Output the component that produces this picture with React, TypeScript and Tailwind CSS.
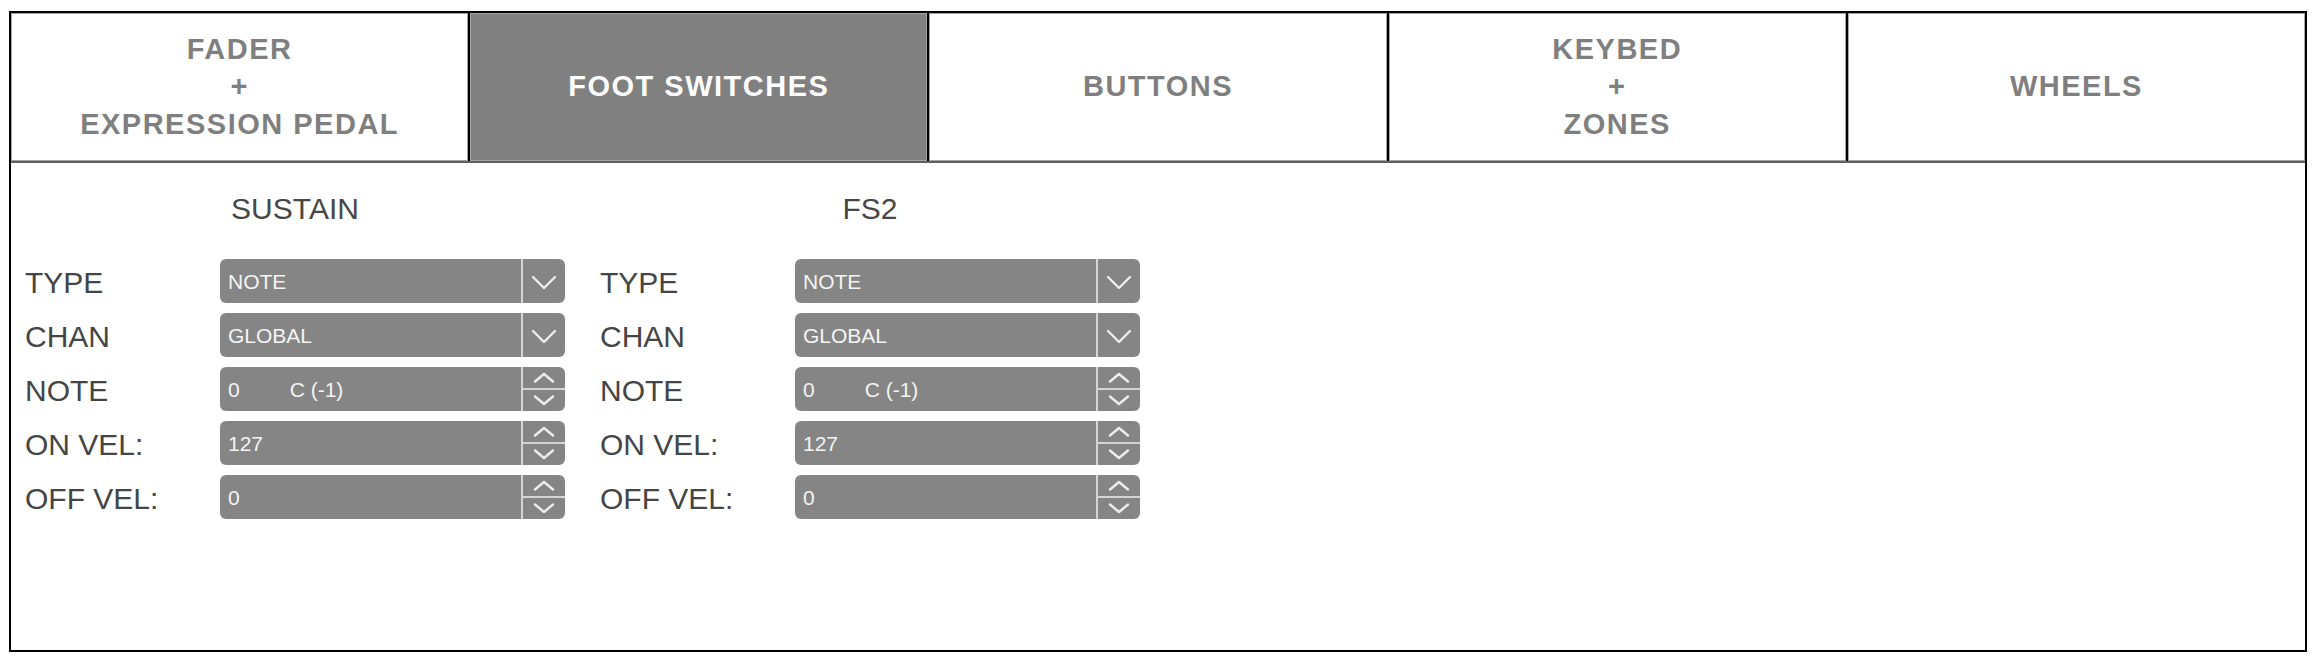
import React from 'react'

const tabs = [
  { lines: ['FADER', '+', 'EXPRESSION PEDAL'], active: false },
  { lines: ['FOOT SWITCHES'], active: true },
  { lines: ['BUTTONS'], active: false },
  { lines: ['KEYBED', '+', 'ZONES'], active: false },
  { lines: ['WHEELS'], active: false },
]

type Field = { label: string; value: string; extra?: string; kind: 'select' | 'spin' }

const fields: Field[] = [
  { label: 'TYPE', value: 'NOTE', kind: 'select' },
  { label: 'CHAN', value: 'GLOBAL', kind: 'select' },
  { label: 'NOTE', value: '0', extra: 'C (-1)', kind: 'spin' },
  { label: 'ON VEL:', value: '127', kind: 'spin' },
  { label: 'OFF VEL:', value: '0', kind: 'spin' },
]

const Chevron = ({ up = false, small = false }: { up?: boolean; small?: boolean }) => (
  <svg
    width={small ? 22 : 26}
    height={small ? 11 : 15}
    viewBox={small ? '0 0 22 11' : '0 0 26 15'}
    fill="none"
    stroke="#ededed"
    strokeWidth={2.4}
    strokeLinecap="round"
    strokeLinejoin="round"
  >
    {small ? (
      up ? (
        <polyline points="2,9.5 11,2 20,9.5" />
      ) : (
        <polyline points="2,1.5 11,9 20,1.5" />
      )
    ) : (
      <polyline points="2,2 13,13 24,2" />
    )}
  </svg>
)

const Control = ({ field }: { field: Field }) => (
  <div className="flex h-[44px] w-[345px] overflow-hidden rounded-[6px] bg-[#858585]">
    <div className="flex flex-1 items-center gap-[50px] pl-[8px] text-[21px] leading-none text-[#f4f4f4]">
      <span>{field.value}</span>
      {field.extra && <span>{field.extra}</span>}
    </div>
    <div className="flex w-[44px] flex-col border-l-2 border-[#d4d4d4]">
      {field.kind === 'select' ? (
        <div className="flex flex-1 items-center justify-center pt-[2px]">
          <Chevron />
        </div>
      ) : (
        <>
          <div className="flex flex-1 items-center justify-center border-b-2 border-[#d4d4d4]">
            <Chevron up small />
          </div>
          <div className="flex flex-1 items-center justify-center">
            <Chevron small />
          </div>
        </>
      )}
    </div>
  </div>
)

const SwitchPanel = ({ title }: { title: string }) => (
  <div className="flex w-[540px] flex-col">
    <div className="flex h-[40px] items-center justify-center text-[30px] text-[#474747]">
      {title}
    </div>
    <div className="mt-[31px] flex flex-col gap-[10px]">
      {fields.map((f) => (
        <div key={f.label} className="flex items-center">
          <div className="w-[195px] pt-[4px] text-[30px] leading-none text-[#454545]">{f.label}</div>
          <Control field={f} />
        </div>
      ))}
    </div>
  </div>
)

export default function App() {
  return (
    <div
      className="min-h-[664px] w-[2322px] bg-white pl-[9px] pt-[11px]"
      style={{ fontFamily: '"Liberation Sans", Arial, sans-serif' }}
    >
      <div className="flex h-[641px] w-[2298px] flex-col border-2 border-black">
        <div className="flex h-[150px] border-b-2 border-[#5f5f5f]">
          {tabs.map((tab, i) => (
            <div
              key={i}
              className={`flex flex-1 flex-col items-center justify-center text-[29px] font-bold leading-[37.5px] tracking-[1.5px] shadow-[inset_0_0_0_1px_#a5a5a5] ${
                i < tabs.length - 1 ? 'border-r-2 border-black' : ''
              } ${tab.active ? 'bg-[#808080] text-white' : 'bg-white text-[#7f7f7f]'}`}
            >
              {tab.lines.map((l, j) => (
                <span key={j}>{l}</span>
              ))}
            </div>
          ))}
        </div>
        <div className="flex flex-1 gap-[35px] pl-[14px] pt-[25px]">
          <SwitchPanel title="SUSTAIN" />
          <SwitchPanel title="FS2" />
        </div>
      </div>
    </div>
  )
}
